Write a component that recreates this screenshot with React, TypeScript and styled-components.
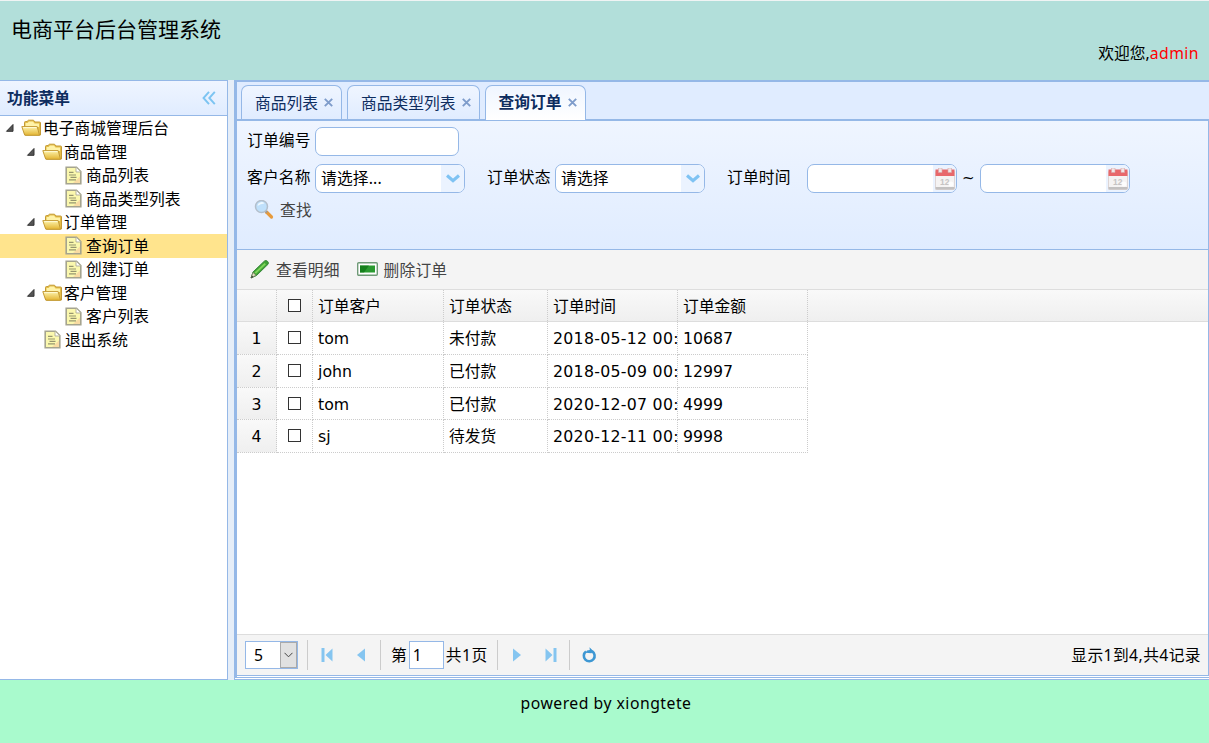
import React from "react";
import styled, { createGlobalStyle, css } from "styled-components";

const line = "#95b8e7";
const cjk = `"Noto Sans CJK SC", sans-serif`;

const Global = createGlobalStyle`
  * { box-sizing: border-box; }
  html, body { margin: 0; padding: 0; background: #fff; overflow: hidden; }
  body { font: 15.75px/20px "Noto Sans", ${cjk}; color: #000; }
  svg { display: block; flex: none; }
`;

const Page = styled.div`
  display: flex;
  flex-direction: column;
  width: 1209px;
  height: 743px;
`;
const Header = styled.header`
  height: 80px;
  background: #b2dfda;
  border-top: 1px solid #f0f4f4;
  display: flex;
  justify-content: space-between;
  padding: 14px 10px 0 11px;
`;
const Title = styled.h1`
  margin: 0;
  font: 400 21px/26px ${cjk};
`;
const Welcome = styled.div`
  padding-top: 28px;
  white-space: nowrap;
`;
const User = styled.span`
  color: #f00;
  letter-spacing: 0.45px;
`;
const Main = styled.div`
  display: flex;
  height: 600px;
  background: #e6eef8;
`;
const Side = styled.aside`
  width: 228px;
  margin-right: 6px;
  background: #fff;
  border: 1px solid ${line};
  border-left: 0;
`;
const SideHead = styled.div`
  height: 35px;
  display: flex;
  align-items: center;
  justify-content: space-between;
  padding: 0 11px 0 7px;
  border-bottom: 1px solid ${line};
  background: linear-gradient(#eff5ff, #e0ecff);
  color: #0e2d5f;
  font-weight: 700;
`;
const Tree = styled.div`
  padding-top: 0.5px;
`;
const Node = styled.div<{ $depth: number; $leaf?: boolean; $on?: boolean }>`
  height: 23.5px;
  display: flex;
  align-items: center;
  gap: ${(p) => (p.$leaf ? 4 : 1)}px;
  padding-left: ${(p) => 5 + p.$depth * 21 + (p.$leaf ? 18 : 0)}px;
  background: ${(p) => (p.$on ? "#ffe48d" : "transparent")};
  white-space: nowrap;
`;
const Center = styled.main`
  flex: 1;
  display: flex;
  flex-direction: column;
  border-left: 1px solid ${line};
  border-top: 1px solid ${line};
  border-bottom: 1px solid ${line};
  background: #fff;
  padding-bottom: 1px;
`;
const Tabbed = styled.div`
  flex: 1;
  display: flex;
  flex-direction: column;
  border-top: 1px solid ${line};
  border-bottom: 1px solid ${line};
  border-left: 2px solid ${line};
  padding-bottom: 1px;
`;
const Tabs = styled.div`
  height: 39px;
  display: flex;
  align-items: flex-start;
  gap: 5px;
  padding: 3px 0 0 4px;
  background: #e0ecff;
  border-bottom: 2px solid ${line};
`;
const Tab = styled.div<{ $on?: boolean }>`
  display: flex;
  align-items: center;
  height: ${(p) => (p.$on ? 35 : 34)}px;
  padding: 0 8px 0 13px;
  gap: 6px;
  border: 1px solid ${line};
  border-bottom: 0;
  border-radius: 7px 7px 0 0;
  color: #0e2d5f;
  background: linear-gradient(#eff5ff, #e0ecff);
  white-space: nowrap;
  ${(p) =>
    p.$on &&
    css`
      background: linear-gradient(#eff5ff, #fff);
      font-weight: 700;
      padding-bottom: 2px;
    `}
`;
const Content = styled.div`
  flex: 1;
  display: flex;
  flex-direction: column;
  border-right: 1px solid ${line};
  border-bottom: 1px solid ${line};
`;
const Form = styled.div`
  height: 129px;
  padding: 6px 0 0 10px;
  border-bottom: 1px solid ${line};
  background: linear-gradient(#eff5ff, #e0ecff);
`;
const FormRow = styled.div`
  display: flex;
  align-items: flex-start;
  height: 37px;
`;
const Label = styled.label<{ $w: number }>`
  width: ${(p) => p.$w}px;
  padding-top: 3px;
  letter-spacing: 0.15px;
  white-space: nowrap;
`;
const Field = styled.div<{ $w: number; $after?: number }>`
  width: ${(p) => p.$w}px;
  height: 29px;
  margin-right: ${(p) => p.$after ?? 0}px;
  display: flex;
  overflow: hidden;
  border: 1px solid ${line};
  border-radius: 7px;
  background: #fff;
`;
const FieldText = styled.span`
  flex: 1;
  padding: 3px 0 0 5px;
  letter-spacing: 0.15px;
`;
const Addon = styled.span`
  width: 23px;
  display: flex;
  align-items: center;
  justify-content: center;
  background: #ebf3ff;
`;
const Tilde = styled.span`
  width: 23px;
  padding: 4px 0 0 5px;
  font-family: "DejaVu Sans", sans-serif;
  font-size: 15px;
`;
const LinkButton = styled.div`
  display: flex;
  align-items: center;
  color: #444;
  gap: 6px;
  letter-spacing: 0.15px;
`;
const SearchButton = styled(LinkButton)`
  padding-left: 7px;
  height: 20px;
  margin-top: -1px;
`;
const Toolbar = styled.div`
  height: 40px;
  display: flex;
  align-items: center;
  gap: 17px;
  padding: 0 0 0 13px;
  background: #f4f4f4;
  border-bottom: 1px solid #ddd;
`;
const HeadBand = styled.div`
  height: 32px;
  background: linear-gradient(#f9f9f9, #efefef);
  border-bottom: 1px solid #ddd;
`;
const Row = styled.div<{ $h: number }>`
  width: 571px;
  height: ${(p) => p.$h}px;
  display: grid;
  grid-template-columns: 40px 36px 131px 104px 130px 130px;
`;
const Cell = styled.div<{ $center?: boolean; $head?: boolean; $num?: boolean; $date?: boolean }>`
  display: flex;
  align-items: center;
  justify-content: ${(p) => (p.$center ? "center" : "flex-start")};
  padding-left: ${(p) => (p.$center ? 0 : 5)}px;
  padding-top: ${(p) => (p.$head || (p.$center && !p.$num) ? 0 : 2)}px;
  padding-bottom: ${(p) => (!p.$head && p.$center && !p.$num ? 1 : 0)}px;
  border-right: 1px dotted #ccc;
  border-bottom: ${(p) => (p.$head ? "0" : "1px dotted #ccc")};
  background: ${(p) => (p.$num ? "linear-gradient(#f9f9f9, #efefef)" : "transparent")};
  font-family: ${(p) => (p.$head ? "inherit" : `"DejaVu Sans", ${cjk}`)};
  letter-spacing: ${(p) => (p.$date ? 0.28 : 0)}px;
  white-space: nowrap;
`;
const Box = styled.span`
  width: 13px;
  height: 13px;
  border: 1px solid #333;
  background: #fff;
`;
const Blank = styled.div`
  flex: 1;
  background: #fff;
`;
const Pager = styled.div`
  height: 41px;
  display: flex;
  align-items: center;
  background: #f4f4f4;
  border-top: 1px solid #ddd;
  padding: 0 7px 0 8px;
`;
const PageSize = styled.div`
  width: 53px;
  height: 28px;
  display: flex;
  border: 1px solid ${line};
  background: #fff;
`;
const SizeText = styled.span`
  flex: 1;
  padding: 3px 0 0 8px;
`;
const SizeArrow = styled.span`
  width: 17px;
  display: flex;
  align-items: center;
  justify-content: center;
  border: 1px solid #aaa;
  background: #e1e1e1;
`;
const Sep = styled.span<{ $l: number; $r: number }>`
  width: 1px;
  height: 30px;
  margin: 0 ${(p) => p.$r}px 0 ${(p) => p.$l}px;
  background: #ccc;
`;
const PageInput = styled.div`
  width: 35px;
  height: 28px;
  margin: 0 2px 0 2px;
  padding: 3px 0 0 3px;
  border: 1px solid ${line};
  background: #fff;
`;
const PageTotal = styled.span`
  width: 43px;
  letter-spacing: 0.5px;
  white-space: nowrap;
`;
const IconSlot = styled.span<{ $w: number }>`
  width: ${(p) => p.$w}px;
`;
const Info = styled.span`
  margin-left: auto;
  letter-spacing: 0.4px;
`;
const Footer = styled.footer`
  height: 63px;
  padding-top: 13px;
  padding-left: 3px;
  text-align: center;
  background: #a9facd;
`;
const FooterText = styled.span`
  letter-spacing: 0.5px;
`;

const Folder = () => (
  <svg width="21" height="18" viewBox="0 0 21 18">
    <defs>
      <linearGradient id="fold" x1="0" y1="0" x2="0" y2="1">
        <stop offset="0" stopColor="#fdf3ab" />
        <stop offset="1" stopColor="#e3b432" />
      </linearGradient>
    </defs>
    <path d="M3.500 16V3.500q0-1 1-1H6L7.500 1.200h5L14 3h4.500q1 0 1 1v12z" fill="#e3bd48" stroke="#c49a35" />
    <path d="M4.500 8V4h2l1.500-1.600h4L13.500 4.400H18V8z" fill="#fff3a8" />
    <path d="M.8 7.600h15.400l2.300 8.700H5q-1.200 0-1.600-1z" fill="url(#fold)" stroke="#c49a35" />
    <path d="M2.200 8.600h13.300" stroke="#fffbd8" />
  </svg>
);
const File = () => (
  <svg width="17" height="19" viewBox="0 0 17 19">
    <path d="M1.200 1.200h10.300L15.800 5.500V17.800H1.200z" fill="#fbf8ae" stroke="#a5a48f" strokeWidth="1.600" />
    <path d="M11 1.500V6h4.500" fill="#fff" stroke="#b5b39c" />
    <path d="M8 17l7-6.500v6.500z" fill="#f8d3a0" opacity=".8" />
    <path d="M4 6.300h4.500M4 9h7M5.500 11.300h6M4 13.900h7" stroke="#96956f" strokeWidth="1.200" />
  </svg>
);
const Expander = () => (
  <svg width="15" height="18" viewBox="0 0 15 18">
    <path d="M8 5.500V12.300H1.500z" fill="#555" stroke="#333" strokeLinejoin="round" />
  </svg>
);
const Collapse = () => (
  <svg width="14" height="14" viewBox="0 0 14 14" fill="none" stroke="#7cc4f2" strokeWidth="1.900">
    <path d="M7 .8L1.500 7L7 13.200M12.800 .8L7.300 7l5.500 6.200" />
  </svg>
);
const Close = () => (
  <svg width="9" height="9" viewBox="0 0 9 9" stroke="#7e9ccb" strokeWidth="1.900">
    <path d="M.8 .8l7.400 7.400M8.200 .8L.8 8.200" />
  </svg>
);
const Chevron = () => (
  <svg width="14" height="9" viewBox="0 0 14 9" fill="none" stroke="#7fc3f3" strokeWidth="3.200">
    <path d="M1 1.500l6 5.200l6-5.200" />
  </svg>
);
const Calendar = () => (
  <svg width="20" height="22" viewBox="0 0 20 22">
    <rect x=".5" y="3" width="19" height="18.500" rx="1" fill="#f5f3f3" stroke="#ddd5d5" />
    <path d="M.5 1.500h19V8H.5z" fill="#e8686b" />
    <path d="M3.500 0h3.500v4.500H3.500zM13 0h3.500v4.500H13z" fill="#f1e6e6" stroke="#d9a5a5" strokeWidth=".6" />
    <path d="M.5 19h19v2.500H.5z" fill="#c3c1c1" />
    <text x="5" y="16.500" fontSize="8.500" fontWeight="700" fill="#c6c4c4" fontFamily="Liberation Sans">12</text>
    <circle cx="16" cy="16" r="2.500" fill="#fff" opacity=".8" />
  </svg>
);
const Search = () => (
  <svg width="20" height="20" viewBox="0 0 20 20">
    <path d="M12.500 12l5 5" stroke="#e79a3c" strokeWidth="3.200" strokeLinecap="round" />
    <path d="M11.500 11l1.500 1.500" stroke="#999" strokeWidth="2" />
    <circle cx="7.500" cy="6.500" r="6" fill="#bfe0fb" stroke="#b3bfcc" strokeWidth="1.500" />
    <path d="M3.500 6a4 4 0 0 1 7-2.500q-4 0-7 2.500" fill="#eef8ff" />
  </svg>
);
const Pencil = () => (
  <svg width="20" height="20" viewBox="0 0 20 20">
    <path d="M1 18l2-6L14.500 1q1.500-1 3 .3t.5 3L6.500 15.500z" fill="#3fa235" stroke="#38873a" />
    <path d="M4.500 12.500L14.500 3l1.500 1.200L6 13.800z" fill="#7ed65a" />
    <path d="M1 18l2-5.500l3 2.700z" fill="#e3e0c4" stroke="#777b60" strokeWidth=".7" />
    <path d="M1 18l1-2.500l1.400 1.400z" fill="#333" />
  </svg>
);
const Remove = () => (
  <svg width="21" height="16" viewBox="0 0 21 16">
    <rect x=".7" y=".7" width="19.600" height="12.600" rx="1" fill="#fff" stroke="#6f9a77" strokeWidth="1.400" />
    <rect x="3" y="3.500" width="15" height="7" fill="#2a9a30" />
    <path d="M3 3.500h9l-5 7H3z" fill="#0b7512" opacity=".7" />
  </svg>
);
const First = () => (
  <svg width="12" height="14" viewBox="0 0 12 14" fill="#85c5f0">
    <path d="M.5 0h3v14h-3zM11.500 .5v13L4.500 7z" />
  </svg>
);
const Prev = () => (
  <svg width="10" height="14" viewBox="0 0 10 14" fill="#85c5f0">
    <path d="M9 .5v13L1 7z" />
  </svg>
);
const Next = () => (
  <svg width="10" height="14" viewBox="0 0 10 14" fill="#85c5f0">
    <path d="M1 .5v13L9 7z" />
  </svg>
);
const Last = () => (
  <svg width="12" height="14" viewBox="0 0 12 14" fill="#85c5f0">
    <path d="M8.500 0h3v14h-3zM.5 .5v13L7.500 7z" />
  </svg>
);
const Reload = () => (
  <svg width="15" height="17" viewBox="0 0 15 17">
    <path d="M10 4.200A5.400 5.400 0 1 1 4 4.500" fill="none" stroke="#3d97d3" strokeWidth="2.600" />
    <path d="M7.500 .3L11 3.700L9.500 6.200L3.500 5.800L5 3.600L7.800 3z" fill="#3d97d3" />
  </svg>
);

type Item = { text: string; depth: number; leaf?: boolean; on?: boolean };
const items: Item[] = [
  { text: "电子商城管理后台", depth: 0 },
  { text: "商品管理", depth: 1 },
  { text: "商品列表", depth: 2, leaf: true },
  { text: "商品类型列表", depth: 2, leaf: true },
  { text: "订单管理", depth: 1 },
  { text: "查询订单", depth: 2, leaf: true, on: true },
  { text: "创建订单", depth: 2, leaf: true },
  { text: "客户管理", depth: 1 },
  { text: "客户列表", depth: 2, leaf: true },
  { text: "退出系统", depth: 1, leaf: true },
];
const orders = [
  { h: 33, c: ["tom", "未付款", "2018-05-12 00:", "10687"] },
  { h: 33, c: ["john", "已付款", "2018-05-09 00:", "12997"] },
  { h: 32, c: ["tom", "已付款", "2020-12-07 00:", "4999"] },
  { h: 33, c: ["sj", "待发货", "2020-12-11 00:", "9998"] },
];

export default function App() {
  return (
    <Page>
      <Global />
      <Header>
        <Title>电商平台后台管理系统</Title>
        <Welcome>
          欢迎您,<User>admin</User>
        </Welcome>
      </Header>
      <Main>
        <Side>
          <SideHead>
            功能菜单
            <Collapse />
          </SideHead>
          <Tree>
            {items.map((n) => (
              <Node key={n.text} $depth={n.depth} $leaf={n.leaf} $on={n.on}>
                {n.leaf ? <File /> : <><Expander /><Folder /></>}
                <span>{n.text}</span>
              </Node>
            ))}
          </Tree>
        </Side>
        <Center>
          <Tabbed>
            <Tabs>
              <Tab>商品列表<Close /></Tab>
              <Tab>商品类型列表<Close /></Tab>
              <Tab $on>查询订单<Close /></Tab>
            </Tabs>
            <Content>
              <Form>
                <FormRow>
                  <Label $w={68}>订单编号</Label>
                  <Field $w={144} />
                </FormRow>
                <FormRow>
                  <Label $w={68}>客户名称</Label>
                  <Field $w={150} $after={22}>
                    <FieldText>请选择...</FieldText>
                    <Addon><Chevron /></Addon>
                  </Field>
                  <Label $w={68}>订单状态</Label>
                  <Field $w={150} $after={22}>
                    <FieldText>请选择</FieldText>
                    <Addon><Chevron /></Addon>
                  </Field>
                  <Label $w={80}>订单时间</Label>
                  <Field $w={150}>
                    <FieldText />
                    <Addon><Calendar /></Addon>
                  </Field>
                  <Tilde>~</Tilde>
                  <Field $w={150}>
                    <FieldText />
                    <Addon><Calendar /></Addon>
                  </Field>
                </FormRow>
                <SearchButton><Search />查找</SearchButton>
              </Form>
              <Toolbar>
                <LinkButton><Pencil />查看明细</LinkButton>
                <LinkButton><Remove />删除订单</LinkButton>
              </Toolbar>
              <HeadBand>
                <Row $h={31}>
                  <Cell $head />
                  <Cell $head $center><Box /></Cell>
                  <Cell $head>订单客户</Cell>
                  <Cell $head>订单状态</Cell>
                  <Cell $head>订单时间</Cell>
                  <Cell $head>订单金额</Cell>
                </Row>
              </HeadBand>
              {orders.map((o, i) => (
                <Row key={i} $h={o.h}>
                  <Cell $num $center>{i + 1}</Cell>
                  <Cell $center><Box /></Cell>
                  {o.c.map((t, j) => (
                    <Cell key={j} $date={j === 2}>{t}</Cell>
                  ))}
                </Row>
              ))}
              <Blank />
              <Pager>
                <PageSize>
                  <SizeText>5</SizeText>
                  <SizeArrow>
                    <svg width="9" height="6" viewBox="0 0 9 6" fill="none" stroke="#444">
                      <path d="M.5 .8l4 4l4-4" />
                    </svg>
                  </SizeArrow>
                </PageSize>
                <Sep $l={9} $r={13} />
                <IconSlot $w={35}><First /></IconSlot>
                <IconSlot $w={10}><Prev /></IconSlot>
                <Sep $l={14} $r={10} />
                第
                <PageInput>1</PageInput>
                <PageTotal>共1页</PageTotal>
                <Sep $l={8} $r={14} />
                <IconSlot $w={33}><Next /></IconSlot>
                <IconSlot $w={12}><Last /></IconSlot>
                <Sep $l={12} $r={12} />
                <Reload />
                <Info>显示1到4,共4记录</Info>
              </Pager>
            </Content>
          </Tabbed>
        </Center>
      </Main>
      <Footer>
        <FooterText>powered by xiongtete</FooterText>
      </Footer>
    </Page>
  );
}
